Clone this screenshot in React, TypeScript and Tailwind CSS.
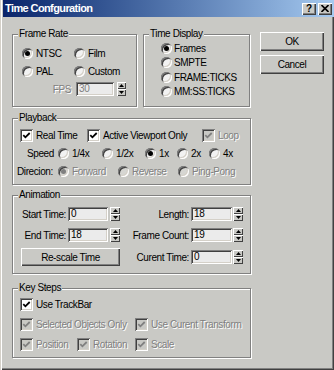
import React from "react";

const dis = "text-[#808080] [text-shadow:1px_1px_0_#ffffff]";

function Radio({ checked = false, disabled = false }: { checked?: boolean; disabled?: boolean }) {
  return (
    <span
      className={`relative inline-block w-[11px] h-[11px] rounded-full shrink-0 ${
        disabled ? "bg-[#d6d6d2]" : "bg-[#f2f2f2]"
      } shadow-[inset_1px_1px_0_#808080,inset_-1px_-1px_0_#ffffff,inset_2px_2px_0_#404040,inset_-2px_-2px_0_#d4d0c8]`}
    >
      {checked && (
        <span
          className={`absolute left-[3px] top-[3px] w-[5px] h-[5px] rounded-full ${
            disabled ? "bg-[#808080]" : "bg-black"
          }`}
        />
      )}
    </span>
  );
}

function Check({ checked = true, disabled = false }: { checked?: boolean; disabled?: boolean }) {
  return (
    <span
      className={`relative inline-flex items-center justify-center w-[13px] h-[13px] shrink-0 ${
        disabled ? "bg-[#c9c9c5]" : "bg-white"
      } shadow-[inset_1px_1px_0_#808080,inset_-1px_-1px_0_#ffffff,inset_2px_2px_0_#404040,inset_-2px_-2px_0_#d4d0c8]`}
    >
      {checked && (
        <svg width="9" height="9" viewBox="0 0 9 9">
          <path
            d="M1.3 4.2 L3.4 6.3 L7.7 2"
            stroke={disabled ? "#808080" : "#000000"}
            strokeWidth="1.8"
            fill="none"
          />
        </svg>
      )}
    </span>
  );
}

function Field({ value, w, disabled = false }: { value: string; w: string; disabled?: boolean }) {
  return (
    <div
      className={`h-[14px] ${w} shrink-0 bg-[#ebebeb] shadow-[inset_1px_1px_0_#808080,inset_-1px_-1px_0_#ffffff,inset_2px_2px_0_#404040,inset_-2px_-2px_0_#d4d0c8] pl-[3px] leading-[14px] ${
        disabled ? "text-[#808080]" : "text-black"
      }`}
    >
      {value}
    </div>
  );
}

function Spin({ w = "w-[10px]", ml = "ml-[2px]" }: { w?: string; ml?: string }) {
  const half =
    "flex-1 flex items-center justify-center bg-[#c9c9c5] shadow-[inset_1px_1px_0_#ffffff,inset_-1px_-1px_0_#404040]";
  return (
    <div className={`flex flex-col h-[14px] shrink-0 ${w} ${ml}`}>
      <div className={half}>
        <svg width="5" height="3" viewBox="0 0 5 3">
          <path d="M2.5 0 L5 3 L0 3Z" fill="#000" />
        </svg>
      </div>
      <div className={half}>
        <svg width="5" height="3" viewBox="0 0 5 3">
          <path d="M0 0 L5 0 L2.5 3Z" fill="#000" />
        </svg>
      </div>
    </div>
  );
}

function Group({
  title,
  className,
  children,
}: {
  title: string;
  className: string;
  children: React.ReactNode;
}) {
  return (
    <div
      className={`relative shrink-0 border border-[#808080] shadow-[1px_1px_0_#ffffff,inset_1px_1px_0_#ffffff] ${className}`}
    >
      <span className="absolute left-[5px] top-[-7px] px-[1px] bg-[#c9c9c5] leading-[12px]">{title}</span>
      {children}
    </div>
  );
}

function Btn({ children, className }: { children: React.ReactNode; className: string }) {
  return (
    <div
      className={`flex items-center justify-center bg-[#c9c9c5] shadow-[inset_1px_1px_0_#ffffff,inset_-1px_-1px_0_#404040,inset_-2px_-2px_0_#808080] ${className}`}
    >
      {children}
    </div>
  );
}

export default function App() {
  return (
    <div className="w-[334px] h-[370px] bg-[#c9c9c5] pl-[3px] flex flex-col font-['Liberation_Sans',Arial,sans-serif] text-[10px] tracking-[-0.4px] text-black shadow-[inset_1px_0_0_#d4d0c8,inset_2px_0_0_#ffffff,inset_-1px_-1px_0_#404040,inset_-2px_-2px_0_#808080] overflow-hidden">
      {/* Title bar */}
      <div className="h-[17px] shrink-0 flex items-center bg-linear-to-r from-[#0a246a] to-[#a6caf0] pl-[2px] pr-[2px]">
        <span className="font-bold text-white text-[11px] tracking-[-0.6px]">Time Confguration</span>
        <div className="ml-auto flex gap-[2px]">
          <div className="w-[14px] h-[12px] flex items-center justify-center bg-[#c9c9c5] shadow-[inset_1px_1px_0_#ffffff,inset_-1px_-1px_0_#404040,inset_-2px_-2px_0_#808080] text-[10px] font-bold leading-none tracking-normal">
            ?
          </div>
          <div className="w-[14px] h-[12px] flex items-center justify-center bg-[#c9c9c5] shadow-[inset_1px_1px_0_#ffffff,inset_-1px_-1px_0_#404040,inset_-2px_-2px_0_#808080]">
            <svg width="8" height="7" viewBox="0 0 8 7">
              <path d="M0.5 0 L7.5 7 M7.5 0 L0.5 7" stroke="#000" strokeWidth="1.6" />
            </svg>
          </div>
        </div>
      </div>

      <div className="flex flex-col pl-[9px]">
        {/* Top row */}
        <div className="flex items-start mt-[15px]">
          <Group title="Frame Rate" className="mt-[2px] w-[125px] h-[73px]">
            <div className="pt-[9px] pl-[9px] flex flex-col">
              <div className="h-[18px] flex items-center">
                <div className="w-[52px] flex items-center gap-[3px]">
                  <Radio checked />
                  <span>NTSC</span>
                </div>
                <div className="flex items-center gap-[3px]">
                  <Radio />
                  <span>Film</span>
                </div>
              </div>
              <div className="h-[18px] flex items-center">
                <div className="w-[52px] flex items-center gap-[3px]">
                  <Radio />
                  <span>PAL</span>
                </div>
                <div className="flex items-center gap-[3px]">
                  <Radio />
                  <span>Custom</span>
                </div>
              </div>
              <div className="mt-[2px] h-[14px] flex items-center">
                <div className={`w-[54px] text-right pr-[5px] ${dis}`}>FPS</div>
                <Field value="30" w="w-[38px]" disabled />
                <Spin w="w-[9px]" ml="ml-[3px]" />
              </div>
            </div>
          </Group>

          <Group title="Time Display" className="ml-[6px] mt-[2px] w-[107px] h-[73px]">
            <div className="pt-[6px] pl-[17px] flex flex-col">
              <div className="h-[14.5px] flex items-center gap-[2px]">
                <Radio checked />
                <span>Frames</span>
              </div>
              <div className="h-[14.5px] flex items-center gap-[2px]">
                <Radio />
                <span>SMPTE</span>
              </div>
              <div className="h-[14.5px] flex items-center gap-[2px]">
                <Radio />
                <span>FRAME:TICKS</span>
              </div>
              <div className="h-[14.5px] flex items-center gap-[2px]">
                <Radio />
                <span>MM:SS:TICKS</span>
              </div>
            </div>
          </Group>

          <div className="ml-[10px] flex flex-col gap-[4px]">
            <Btn className="w-[64px] h-[19px]">OK</Btn>
            <Btn className="w-[64px] h-[19px]">Cancel</Btn>
          </div>
        </div>

        {/* Playback */}
        <Group title="Playback" className="mt-[11px] w-[239px] h-[67px]">
          <div className="pt-[7px] pl-[4px] flex flex-col">
            <div className="h-[18px] flex items-center pl-[3px]">
              <div className="w-[67px] flex items-center gap-[3px]">
                <Check />
                <span>Real Time</span>
              </div>
              <div className="w-[115px] flex items-center gap-[3px]">
                <Check />
                <span>Active Viewport Only</span>
              </div>
              <div className="flex items-center gap-[3px]">
                <Check disabled />
                <span className={dis}>Loop</span>
              </div>
            </div>
            <div className="h-[18px] flex items-center">
              <div className="w-[41px] pl-[10px]">Speed</div>
              <div className="w-[44px] flex items-center gap-[3px]">
                <Radio />
                <span>1/4x</span>
              </div>
              <div className="w-[43px] flex items-center gap-[3px]">
                <Radio />
                <span>1/2x</span>
              </div>
              <div className="w-[32px] flex items-center gap-[3px]">
                <Radio checked />
                <span>1x</span>
              </div>
              <div className="w-[32px] flex items-center gap-[3px]">
                <Radio />
                <span>2x</span>
              </div>
              <div className="flex items-center gap-[3px]">
                <Radio />
                <span>4x</span>
              </div>
            </div>
            <div className="h-[19px] flex items-center">
              <div className="w-[41px]">Direcion:</div>
              <div className="w-[60px] flex items-center gap-[3px]">
                <Radio checked disabled />
                <span className={dis}>Forward</span>
              </div>
              <div className="w-[60px] flex items-center gap-[3px]">
                <Radio disabled />
                <span className={dis}>Reverse</span>
              </div>
              <div className="flex items-center gap-[3px]">
                <Radio disabled />
                <span className={dis}>Ping-Pong</span>
              </div>
            </div>
          </div>
        </Group>

        {/* Animation */}
        <Group title="Animation" className="mt-[10px] w-[239px] h-[79px]">
          <div className="pt-[11px] flex flex-col">
            <div className="h-[14px] flex items-center">
              <div className="w-[55px] text-right pr-[2px]">Start Time:</div>
              <Field value="0" w="w-[40px]" />
              <Spin />
              <div className="w-[71px] text-right pr-[2px]">Length:</div>
              <Field value="18" w="w-[41px]" />
              <Spin ml="ml-[1px]" />
            </div>
            <div className="mt-[7px] h-[14px] flex items-center">
              <div className="w-[55px] text-right pr-[2px]">End Time:</div>
              <Field value="18" w="w-[40px]" />
              <Spin />
              <div className="w-[71px] text-right pr-[2px]">Frame Count:</div>
              <Field value="19" w="w-[41px]" />
              <Spin ml="ml-[1px]" />
            </div>
            <div className="mt-[6px] h-[18px] flex items-center">
              <Btn className="ml-[8px] w-[99px] h-[18px]">Re-scale Time</Btn>
              <div className="w-[71px] text-right pr-[2px]">Curent Time:</div>
              <Field value="0" w="w-[41px]" />
              <Spin ml="ml-[1px]" />
            </div>
          </div>
        </Group>

        {/* Key Steps */}
        <Group title="Key Steps" className="mt-[14px] w-[239px] h-[70px]">
          <div className="pt-[5px] pl-[7px] flex flex-col">
            <div className="h-[20px] flex items-center gap-[3px]">
              <Check />
              <span>Use TrackBar</span>
            </div>
            <div className="h-[20px] flex items-center">
              <div className="w-[115px] flex items-center gap-[3px]">
                <Check disabled />
                <span className={dis}>Selected Objects Only</span>
              </div>
              <div className="flex items-center gap-[3px]">
                <Check disabled />
                <span className={dis}>Use Curent Transform</span>
              </div>
            </div>
            <div className="h-[20px] flex items-center">
              <div className="w-[57px] flex items-center gap-[3px]">
                <Check disabled />
                <span className={dis}>Position</span>
              </div>
              <div className="w-[58px] flex items-center gap-[3px]">
                <Check disabled />
                <span className={dis}>Rotation</span>
              </div>
              <div className="flex items-center gap-[3px]">
                <Check disabled />
                <span className={dis}>Scale</span>
              </div>
            </div>
          </div>
        </Group>
      </div>
    </div>
  );
}
